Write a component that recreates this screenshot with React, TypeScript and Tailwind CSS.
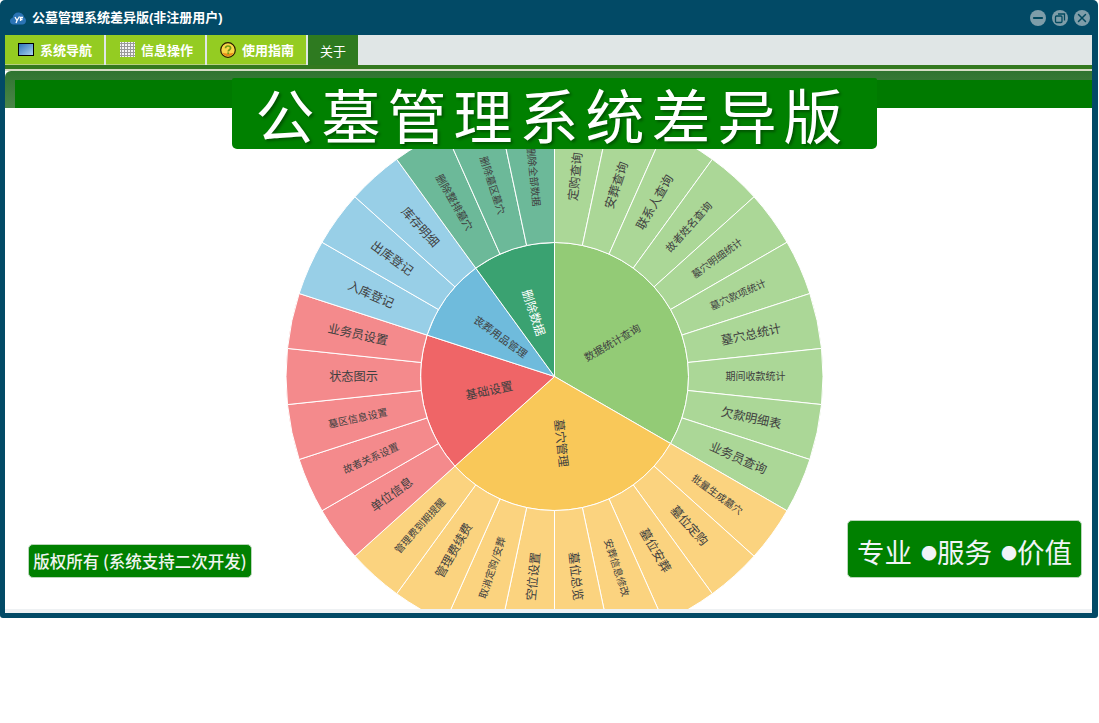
import React from 'react';
import { Minus, X } from 'lucide-react';

const CX = 268.5;
const CY = 268.5;
const R0 = 134;
const R1 = 268.5;

interface Leaf {
  name: string;
  size?: number;
}

interface Group {
  name: string;
  size?: number;
  fill: string;
  leafFill: string;
  labelColor?: string;
  leaves: Leaf[];
}

const groups: Group[] = [
  {
    name: '数据统计查询',
    size: 10.5,
    fill: '#93cb76',
    leafFill: '#abd797',
    leaves: [
      { name: '定购查询' },
      { name: '安葬查询' },
      { name: '联系人查询' },
      { name: '故者姓名查询', size: 10.5 },
      { name: '墓穴明细统计', size: 10 },
      { name: '墓穴款项统计', size: 10 },
      { name: '墓穴总统计' },
      { name: '期间收款统计', size: 10 },
      { name: '欠款明细表' },
      { name: '业务员查询' },
    ],
  },
  {
    name: '墓穴管理',
    fill: '#f9c859',
    leafFill: '#fbd37f',
    leaves: [
      { name: '批量生成墓穴', size: 10 },
      { name: '墓位定购' },
      { name: '墓位安葬' },
      { name: '安葬信息修改', size: 10 },
      { name: '墓位总览' },
      { name: '空位设置' },
      { name: '取消定购/安葬', size: 10 },
      { name: '管理费续费' },
      { name: '管理费到期提醒', size: 10 },
    ],
  },
  {
    name: '基础设置',
    fill: '#ef6567',
    leafFill: '#f48a8c',
    leaves: [
      { name: '单位信息' },
      { name: '故者关系设置', size: 10 },
      { name: '墓区信息设置', size: 10 },
      { name: '状态图示' },
      { name: '业务员设置' },
    ],
  },
  {
    name: '丧葬用品管理',
    size: 10.5,
    fill: '#6fbbdc',
    leafFill: '#98cfe7',
    leaves: [{ name: '入库登记' }, { name: '出库登记' }, { name: '库存明细' }],
  },
  {
    name: '删除数据',
    fill: '#3aa271',
    leafFill: '#6cb999',
    labelColor: '#ffffff',
    leaves: [
      { name: '删除整排墓穴', size: 10.5 },
      { name: '删除墓区墓穴', size: 10 },
      { name: '删除全部数据', size: 10 },
    ],
  },
];

const polar = (r: number, deg: number) => {
  const a = (deg * Math.PI) / 180;
  return [CX + r * Math.sin(a), CY - r * Math.cos(a)];
};

const sector = (r0: number, r1: number, a0: number, a1: number) => {
  const [x0, y0] = polar(r1, a0);
  const [x1, y1] = polar(r1, a1);
  const [x2, y2] = polar(r0, a1);
  const [x3, y3] = polar(r0, a0);
  const large = a1 - a0 > 180 ? 1 : 0;
  if (r0 === 0) return `M${x0} ${y0}A${r1} ${r1} 0 ${large} 1 ${x1} ${y1}L${CX} ${CY}Z`;
  return `M${x0} ${y0}A${r1} ${r1} 0 ${large} 1 ${x1} ${y1}L${x2} ${y2}A${r0} ${r0} 0 ${large} 0 ${x3} ${y3}Z`;
};

const Label = ({ r, deg, text, size = 12, color = '#404040' }: { r: number; deg: number; text: string; size?: number; color?: string }) => {
  const [x, y] = polar(r, deg);
  const rotate = deg < 180 ? deg - 90 : deg - 270;
  return (
    <text
      x={x}
      y={y - 1}
      fontSize={size}
      fill={color}
      textAnchor="middle"
      dominantBaseline="central"
      transform={`rotate(${rotate} ${x} ${y})`}
    >
      {text}
    </text>
  );
};

const Sunburst = () => {
  let angle = 0;
  return (
    <svg width="537" height="537" viewBox="0 0 537 537" className="shrink-0 font-['Noto_Sans_CJK_SC',sans-serif]">
      {groups.map((g) => {
        const start = angle;
        const leaves = g.leaves.map((leaf, i) => {
          const a0 = start + i * 12;
          return (
            <g key={leaf.name}>
              <path d={sector(R0, R1, a0, a0 + 12)} fill={g.leafFill} stroke="#ffffff" strokeWidth="1" />
              <Label r={201} deg={a0 + 6} text={leaf.name} size={leaf.size ?? 12.2} />
            </g>
          );
        });
        angle = start + g.leaves.length * 12;
        return (
          <g key={g.name}>
            <path d={sector(0, R0, start, angle)} fill={g.fill} stroke="#ffffff" strokeWidth="1" />
            {leaves}
            <Label r={67} deg={(start + angle) / 2} text={g.name} size={g.size} color={g.labelColor} />
          </g>
        );
      })}
    </svg>
  );
};

const MonitorIcon = () => (
  <span className="w-4 h-[13px] border border-black bg-gradient-to-br from-[#2a74b8] to-[#a9d3ee]" />
);

const GridIcon = () => (
  <svg width="15" height="15" viewBox="0 0 15 15">
    <rect width="15" height="15" fill="#f4f4f4" />
    <path d="M1.5 0V15M4.5 0V15M7.5 0V15M10.5 0V15M13.5 0V15M0 1.5H15M0 4.5H15M0 7.5H15M0 10.5H15M0 13.5H15" stroke="#9a9a9a" strokeWidth="1" />
  </svg>
);

const HelpIcon = () => (
  <svg width="16" height="16" viewBox="0 0 16 16">
    <circle cx="8" cy="8" r="7.3" fill="#f9d648" stroke="#2a1c00" strokeWidth="1.2" />
    <path d="M2.2 10.500C3.500 13 5.500 14.300 8 14.300C10.500 14.300 12.500 13 13.800 10.500C11 12 5 12 2.200 10.500Z" fill="#e88a1a" />
    <path d="M5.500 6.200C5.600 4.600 6.700 4 8 4C9.500 4 10.600 4.900 10.600 6.100C10.600 7.700 8.200 7.800 8.200 9.600" fill="none" stroke="#6f9a14" strokeWidth="1.700" />
    <rect x="7.300" y="10.400" width="1.800" height="1.800" fill="#6f9a14" />
  </svg>
);

const LogoIcon = () => (
  <svg width="16" height="13" viewBox="0 0 16 13">
    <path d="M3.500 12.500C1.400 12.500 0 11 0 9C0 7.300 1.200 6 2.600 5.700C3.100 2.500 5.400 0.500 8.200 0.500C11.400 0.500 14 2.800 14.300 5.600C15.300 6.200 16 7.400 16 8.800C16 10.900 14.500 12.500 12.300 12.500Z" fill="#2b74b5" />
    <path d="M5 5L7 8.500L9.500 4.500M7 8.500L6 11M10.500 9V5.500H13M10.500 7.500H12.500" fill="none" stroke="#ffffff" strokeWidth="1.300" />
  </svg>
);

const tabs = [
  { label: '系统导航', icon: <MonitorIcon /> },
  { label: '信息操作', icon: <GridIcon /> },
  { label: '使用指南', icon: <HelpIcon /> },
];

export default function App() {
  return (
    <div className="h-[723px] bg-white font-['Liberation_Sans','Noto_Sans_CJK_SC',sans-serif]">
      <div className="w-[1098px] h-[618px] flex flex-col bg-[#024a66] rounded-t-[5px] rounded-b-[3px] pl-[5px] pr-[6px] pb-[5px]">
        <div className="h-[35px] shrink-0 flex items-center pt-px -ml-[5px] -mr-[6px] pl-[10px] pr-[8px]">
          <LogoIcon />
          <span className="ml-[6px] text-[13px] font-bold text-white">公墓管理系统差异版(非注册用户)</span>
          <div className="ml-auto flex items-center gap-[6px] text-[#02495f]">
            <span className="w-[16px] h-[16px] rounded-full bg-[#7e9da9] flex items-center justify-center">
              <Minus size={14} strokeWidth={3.5} />
            </span>
            <span className="w-[16px] h-[16px] rounded-full bg-[#7e9da9] flex items-center justify-center">
              <svg width="12" height="12" viewBox="0 0 12 12" fill="none" stroke="#02495f" strokeWidth="1.300">
                <rect x="1.500" y="4" width="6.500" height="6.500" rx="1" />
                <path d="M4 2H10.500V8.500" />
              </svg>
            </span>
            <span className="w-[16px] h-[16px] rounded-full bg-[#7e9da9] flex items-center justify-center">
              <X size={14} strokeWidth={2.5} />
            </span>
          </div>
        </div>
        <div className="flex-1 min-h-0 flex flex-col">
          <div className="h-[30px] shrink-0 flex bg-[#e0e6e6]">
            {tabs.map((t) => (
              <div key={t.label} className="w-[99px] mr-[2px] flex items-center pl-[13px] bg-[#94cc22] border-b border-[#b8d080]">
                <span className="w-[16px] flex justify-center">{t.icon}</span>
                <span className="ml-[6px] pt-[3px] text-[13px] font-bold text-white">{t.label}</span>
              </div>
            ))}
            <div className="w-[50px] pt-[3px] flex items-center justify-center bg-[#2e7a20] text-[13px] text-white">关于</div>
          </div>
          <div className="h-[4px] shrink-0 bg-[#33791f]" />
          <div className="h-[2px] shrink-0 bg-[#d5dcc6]" />
          <div className="relative flex-1 min-h-0 flex flex-col bg-white">
            <div className="h-[37px] shrink-0 pt-[9px] bg-gradient-to-b from-[#2f7430] to-[#4a8548] rounded-tl-[6px]">
              <div className="h-[28px] ml-[10px] bg-[#007a00]" />
            </div>
            <div className="flex-1 min-h-0 overflow-hidden pl-[281px]">
              <Sunburst />
            </div>
            <div className="h-[4px] shrink-0 bg-[#eef1f3]" />

            <div className="absolute left-[227px] top-[7px] w-[645px] h-[71px] pb-[1px] pr-[4px] flex items-center justify-center rounded-b-[5px] rounded-t-[2px] bg-[#008000] text-[59px] leading-none tracking-[7px] text-white font-['Noto_Sans_CJK_SC',sans-serif] [text-shadow:2px_2px_3px_rgba(0,0,0,0.35)]">
              公墓管理系统差异版
            </div>
            <div className="absolute left-[23px] top-[473px] w-[224px] h-[34px] flex items-center justify-center rounded-[5px] border border-[#b9d6b9] bg-[#008000] text-[16.5px] font-medium text-[#f0f4f0] font-['Noto_Sans_CJK_SC',sans-serif] whitespace-nowrap">
              版权所有 (系统支持二次开发)
            </div>
            <div className="absolute left-[842px] top-[449px] w-[235px] h-[58px] pt-[5px] flex items-center justify-center rounded-[5px] border border-[#b9d6b9] bg-[#008000] text-[27.5px] text-[#f0f4f8] font-['Noto_Sans_CJK_SC',sans-serif] whitespace-nowrap">
              <span>专业</span>
              <span className="ml-[9px] text-[16px]">●</span>
              <span>服务</span>
              <span className="ml-[9px] text-[16px]">●</span>
              <span>价值</span>
            </div>
          </div>
        </div>
      </div>
    </div>
  );
}
